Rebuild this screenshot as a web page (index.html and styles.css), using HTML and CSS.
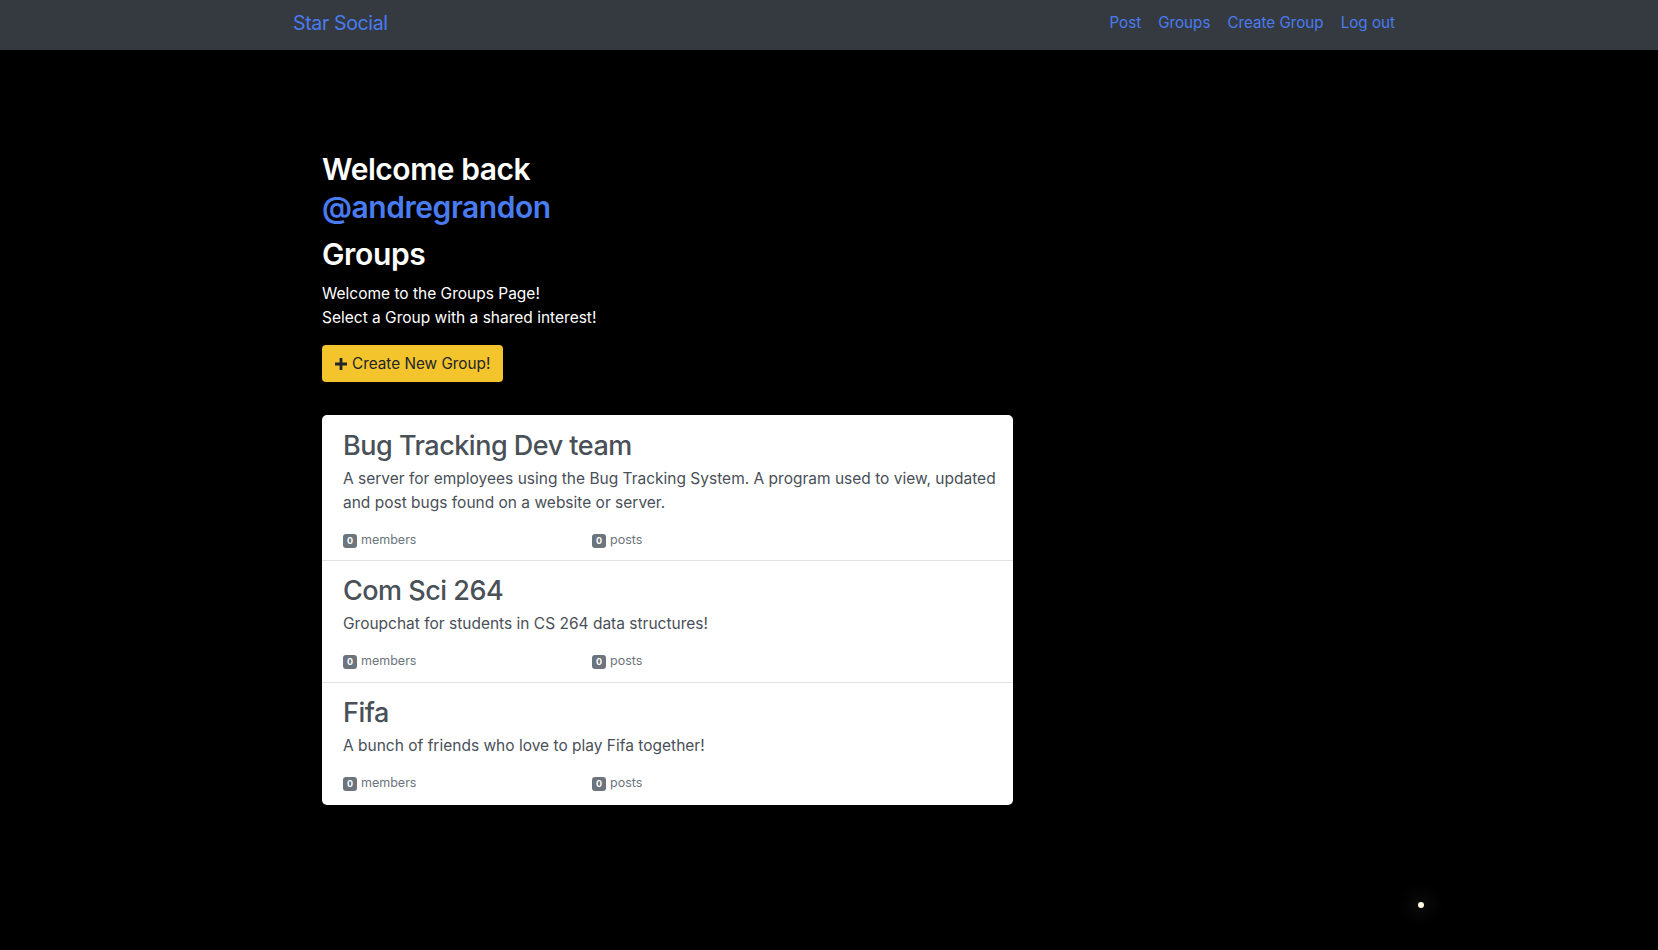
FILE: index.html
```html
<!DOCTYPE html>
<html lang="en">
<head>
<meta charset="utf-8">
<title>Star Social - Groups</title>
<link rel="stylesheet" href="styles.css">
</head>
<body>
<header class="navbar">
  <div class="nav-inner">
    <a class="brand" href="#">Star Social</a>
    <nav class="nav-links">
      <a href="#">Post</a>
      <a href="#">Groups</a>
      <a href="#">Create Group</a>
      <a href="#">Log out</a>
    </nav>
  </div>
</header>
<main class="page">
  <h2 class="welcome">Welcome back<br><span class="username">@andregrandon</span></h2>
  <h2 class="groups-title">Groups</h2>
  <p class="intro">Welcome to the Groups Page!<br>Select a Group with a shared interest!</p>
  <a class="btn-create" href="#">
    <svg class="plus" viewBox="0 0 12 12" width="12" height="12" aria-hidden="true"><path d="M4.6 0h2.8v4.6H12v2.8H7.4V12H4.6V7.4H0V4.6h4.6z" fill="#212529"/></svg>
    <span>Create New Group!</span>
  </a>
  <div class="group-list">
    <a class="group-item" href="#">
      <h3 class="group-name">Bug Tracking Dev team</h3>
      <p class="group-desc">A server for employees using the Bug Tracking System. A program used to view, updated and post bugs found on a website or server.</p>
      <div class="group-stats">
        <span class="stat"><span class="badge">0</span> members</span>
        <span class="stat"><span class="badge">0</span> posts</span>
      </div>
    </a>
    <a class="group-item" href="#">
      <h3 class="group-name">Com Sci 264</h3>
      <p class="group-desc">Groupchat for students in CS 264 data structures!</p>
      <div class="group-stats">
        <span class="stat"><span class="badge">0</span> members</span>
        <span class="stat"><span class="badge">0</span> posts</span>
      </div>
    </a>
    <a class="group-item" href="#">
      <h3 class="group-name">Fifa</h3>
      <p class="group-desc">A bunch of friends who love to play Fifa together!</p>
      <div class="group-stats">
        <span class="stat"><span class="badge">0</span> members</span>
        <span class="stat"><span class="badge">0</span> posts</span>
      </div>
    </a>
  </div>
</main>
<div class="cursor-dot"></div>
</body>
</html>
```
FILE: styles.css
```css
* { box-sizing: border-box; }
html, body { margin: 0; padding: 0; }
body {
  background: #000;
  font-family: Inter, "Liberation Sans", Arial, sans-serif;
  color: #fff;
  min-height: 950px;
  position: relative;
}
a { text-decoration: none; }

.navbar {
  background: #343a40;
  height: 50px;
}
.nav-inner {
  margin-left: 293px;
  width: 1101px;
  height: 50px;
  display: flex;
  align-items: center;
  justify-content: space-between;
}
.brand {
  color: #4a7cf1;
  font-size: 19.5px;
  letter-spacing: -0.35px;
  line-height: 28px;
  margin-top: -4px;
}
.nav-links {
  display: flex;
  gap: 17px;
  margin-top: -4px;
  margin-right: -1px;
}
.nav-links a {
  color: #4a7cf1;
  font-size: 15.2px;
  line-height: 24px;
}

.page {
  margin-left: 322px;
  width: 691px;
  padding-top: 100px;
}
.welcome {
  margin: 0;
  font-size: 30px;
  line-height: 38px;
  font-weight: 600;
  letter-spacing: -0.45px;
  color: #fff;
}
.username { color: #4a7cf1; }
.groups-title {
  margin: 10px 0 0;
  font-size: 30px;
  line-height: 37px;
  font-weight: 600;
  letter-spacing: -0.35px;
  color: #fff;
}
.intro {
  margin: 9px 0 0;
  font-size: 15.5px;
  line-height: 24px;
  color: #fff;
}
.btn-create {
  margin-top: 15px;
  display: inline-flex;
  align-items: center;
  gap: 5px;
  height: 37px;
  padding: 0 13px;
  background: #f3c42b;
  border-radius: 4px;
  color: #212529;
  font-size: 15.3px;
}
.plus { display: block; }

.group-list {
  margin-top: 33px;
  background: #fff;
  border-radius: 5px;
  overflow: hidden;
}
.group-item {
  display: block;
  padding: 13px 12px 11px 21px;
  color: #495057;
  border-top: 1px solid #dee2e6;
}
.group-item:first-child { border-top: none; padding-top: 14px; padding-bottom: 10px; }
.group-item:last-child { padding-bottom: 12px; }
.group-name {
  margin: 0;
  font-size: 27px;
  line-height: 34px;
  font-weight: 500;
  letter-spacing: -0.5px;
  color: #495057;
}
.group-desc {
  margin: 4px 0 0;
  font-size: 15.5px;
  line-height: 24px;
}
.group-stats {
  margin-top: 15px;
  display: grid;
  grid-template-columns: 249px 1fr;
  font-size: 12.5px;
  line-height: 20px;
  color: #6c757d;
}
.stat { display: flex; align-items: center; gap: 4px; }
.badge {
  display: inline-flex;
  align-items: center;
  justify-content: center;
  width: 14px;
  height: 14px;
  border-radius: 3px;
  background: #6c757d;
  color: #fff;
  font-size: 9px;
  font-weight: 700;
  margin-top: 2px;
}
.cursor-dot {
  position: absolute;
  left: 1418px;
  top: 902px;
  width: 6px;
  height: 6px;
  border-radius: 50%;
  background: #fffbe6;
  box-shadow: 0 0 14px 10px rgba(30, 30, 30, 0.35);
}
```
